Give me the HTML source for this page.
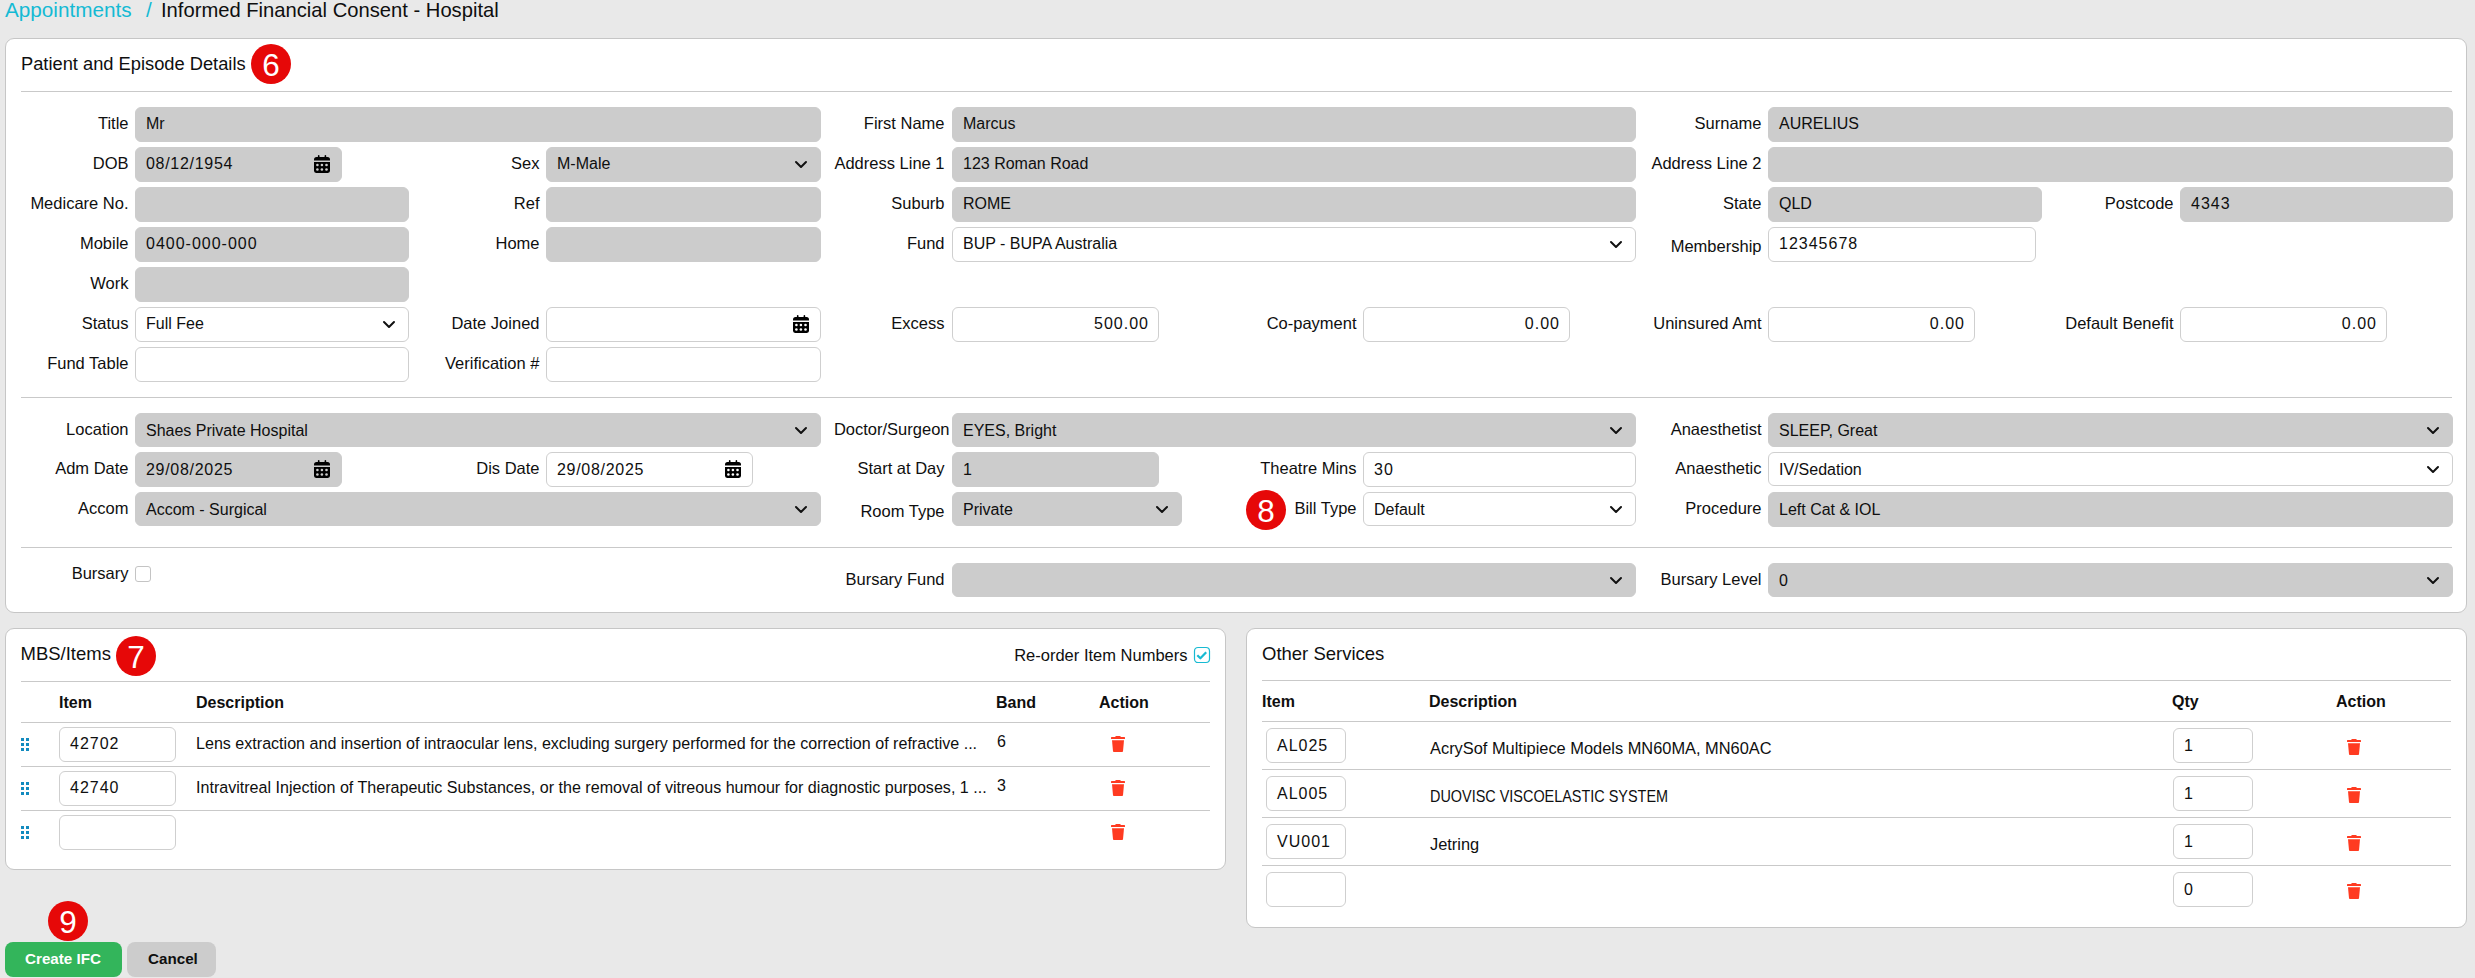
<!DOCTYPE html><html><head><meta charset="utf-8"><style>
html,body{margin:0;padding:0}
body{width:2475px;height:978px;overflow:hidden;background:#e9e9e9;position:relative;font-family:"Liberation Sans",sans-serif;color:#212529}
.t{position:absolute;white-space:nowrap}
.b{position:absolute;box-sizing:border-box;border-radius:6px}
.i{position:absolute;overflow:visible}
.hr{position:absolute;height:1px;background:#c9c9c9}
.card{position:absolute;box-sizing:border-box;background:#fff;border:1px solid #c6c6c6;border-radius:9px}
.bd{position:absolute;width:40px;height:40px;border-radius:50%;background:#e60808;color:#fff;font-size:31.5px;line-height:42px;text-align:center}
</style></head><body>

<div class="t" style="left:5px;top:-5px;font-size:20.7px;font-weight:400;color:#14bad4;line-height:30px;">Appointments</div>
<div class="t" style="left:146px;top:-5px;font-size:20.7px;font-weight:400;color:#14bad4;line-height:30px;">/</div>
<div class="t" style="left:161px;top:-5px;font-size:20.2px;font-weight:400;color:#0f0f0f;line-height:30px;">Informed Financial Consent - Hospital</div>
<div class="card" style="left:5px;top:38px;width:2462px;height:575px"></div>
<div class="t" style="left:21px;top:48px;font-size:18.3px;font-weight:400;color:#0f0f0f;line-height:32px;">Patient and Episode Details</div>
<div class="bd" style="left:251px;top:44px">6</div>
<div class="hr" style="left:21px;top:91px;width:2431px"></div>
<div class="t" style="right:2346.5px;top:107px;font-size:16.5px;font-weight:400;color:#0f0f0f;line-height:33px;">Title</div>
<div class="b" style="left:135px;top:107px;width:686px;height:35px;background:#cccccc;border:1px solid #cccccc"></div>
<div class="t" style="left:146px;top:107px;font-size:16px;font-weight:400;color:#0f0f0f;line-height:33px;">Mr</div>
<div class="t" style="right:1530.5px;top:107px;font-size:16.5px;font-weight:400;color:#0f0f0f;line-height:33px;">First Name</div>
<div class="b" style="left:952px;top:107px;width:684px;height:35px;background:#cccccc;border:1px solid #cccccc"></div>
<div class="t" style="left:963px;top:107px;font-size:16px;font-weight:400;color:#0f0f0f;line-height:33px;">Marcus</div>
<div class="t" style="right:713.5px;top:107px;font-size:16.5px;font-weight:400;color:#0f0f0f;line-height:33px;">Surname</div>
<div class="b" style="left:1768px;top:107px;width:685px;height:35px;background:#cccccc;border:1px solid #cccccc"></div>
<div class="t" style="left:1779px;top:107px;font-size:16px;font-weight:400;color:#0f0f0f;line-height:33px;">AURELIUS</div>
<div class="t" style="right:2346.5px;top:147px;font-size:16.5px;font-weight:400;color:#0f0f0f;line-height:33px;">DOB</div>
<div class="b" style="left:135px;top:147px;width:207px;height:35px;background:#cccccc;border:1px solid #cccccc"></div>
<div class="t" style="left:146px;top:147px;font-size:16px;font-weight:400;color:#0f0f0f;line-height:33px;letter-spacing:0.7px;">08/12/1954</div>
<svg class="i" style="left:314px;top:155px" width="16" height="18" viewBox="0 0 16 18"><rect x="3.9" y="0" width="1.6" height="4" rx="0.8" fill="#000"/><rect x="10.6" y="0" width="1.6" height="4" rx="0.8" fill="#000"/><path d="M0,4.5 Q0,2 2.5,2 L13.5,2 Q16,2 16,4.5 L16,5.6 L0,5.6 Z" fill="#000"/><path d="M0,7.1 L16,7.1 L16,15.8 Q16,17.9 13.9,17.9 L2.1,17.9 Q0,17.9 0,15.8 Z" fill="#000"/><circle cx="3.4" cy="10" r="1.3" fill="#cccccc"/><circle cx="3.4" cy="14.5" r="1.3" fill="#cccccc"/><circle cx="7.9" cy="10" r="1.3" fill="#cccccc"/><circle cx="7.9" cy="14.5" r="1.3" fill="#cccccc"/><circle cx="12.5" cy="10" r="1.3" fill="#cccccc"/><circle cx="12.5" cy="14.5" r="1.3" fill="#cccccc"/></svg>
<div class="t" style="right:1935.5px;top:147px;font-size:16.5px;font-weight:400;color:#0f0f0f;line-height:33px;">Sex</div>
<div class="b" style="left:546px;top:147px;width:275px;height:35px;background:#cccccc;border:1px solid #cccccc"></div>
<div class="t" style="left:557px;top:147px;font-size:16px;font-weight:400;color:#0f0f0f;line-height:33px;">M-Male</div>
<svg class="i" style="left:794px;top:160px" width="14" height="10"><polyline points="2,2 7,7 12,2" fill="none" stroke="#111" stroke-width="2" stroke-linecap="round" stroke-linejoin="round"/></svg>
<div class="t" style="right:1530.5px;top:147px;font-size:16.5px;font-weight:400;color:#0f0f0f;line-height:33px;">Address Line 1</div>
<div class="b" style="left:952px;top:147px;width:684px;height:35px;background:#cccccc;border:1px solid #cccccc"></div>
<div class="t" style="left:963px;top:147px;font-size:16px;font-weight:400;color:#0f0f0f;line-height:33px;">123 Roman Road</div>
<div class="t" style="right:713.5px;top:147px;font-size:16.5px;font-weight:400;color:#0f0f0f;line-height:33px;">Address Line 2</div>
<div class="b" style="left:1768px;top:147px;width:685px;height:35px;background:#cccccc;border:1px solid #cccccc"></div>
<div class="t" style="right:2346.5px;top:187px;font-size:16.5px;font-weight:400;color:#0f0f0f;line-height:33px;">Medicare No.</div>
<div class="b" style="left:135px;top:187px;width:274px;height:35px;background:#cccccc;border:1px solid #cccccc"></div>
<div class="t" style="right:1935.5px;top:187px;font-size:16.5px;font-weight:400;color:#0f0f0f;line-height:33px;">Ref</div>
<div class="b" style="left:546px;top:187px;width:275px;height:35px;background:#cccccc;border:1px solid #cccccc"></div>
<div class="t" style="right:1530.5px;top:187px;font-size:16.5px;font-weight:400;color:#0f0f0f;line-height:33px;">Suburb</div>
<div class="b" style="left:952px;top:187px;width:684px;height:35px;background:#cccccc;border:1px solid #cccccc"></div>
<div class="t" style="left:963px;top:187px;font-size:16px;font-weight:400;color:#0f0f0f;line-height:33px;">ROME</div>
<div class="t" style="right:713.5px;top:187px;font-size:16.5px;font-weight:400;color:#0f0f0f;line-height:33px;">State</div>
<div class="b" style="left:1768px;top:187px;width:274px;height:35px;background:#cccccc;border:1px solid #cccccc"></div>
<div class="t" style="left:1779px;top:187px;font-size:16px;font-weight:400;color:#0f0f0f;line-height:33px;">QLD</div>
<div class="t" style="right:301.5px;top:187px;font-size:16.5px;font-weight:400;color:#0f0f0f;line-height:33px;">Postcode</div>
<div class="b" style="left:2180px;top:187px;width:273px;height:35px;background:#cccccc;border:1px solid #cccccc"></div>
<div class="t" style="left:2191px;top:187px;font-size:16px;font-weight:400;color:#0f0f0f;line-height:33px;letter-spacing:1.0px;">4343</div>
<div class="t" style="right:2346.5px;top:227px;font-size:16.5px;font-weight:400;color:#0f0f0f;line-height:33px;">Mobile</div>
<div class="b" style="left:135px;top:227px;width:274px;height:35px;background:#cccccc;border:1px solid #cccccc"></div>
<div class="t" style="left:146px;top:227px;font-size:16px;font-weight:400;color:#0f0f0f;line-height:33px;letter-spacing:1.0px;">0400-000-000</div>
<div class="t" style="right:1935.5px;top:227px;font-size:16.5px;font-weight:400;color:#0f0f0f;line-height:33px;">Home</div>
<div class="b" style="left:546px;top:227px;width:275px;height:35px;background:#cccccc;border:1px solid #cccccc"></div>
<div class="t" style="right:1530.5px;top:227px;font-size:16.5px;font-weight:400;color:#0f0f0f;line-height:33px;">Fund</div>
<div class="b" style="left:952px;top:227px;width:684px;height:35px;background:#fff;border:1px solid #cfcfcf"></div>
<div class="t" style="left:963px;top:227px;font-size:16px;font-weight:400;color:#0f0f0f;line-height:33px;">BUP - BUPA Australia</div>
<svg class="i" style="left:1609px;top:240px" width="14" height="10"><polyline points="2,2 7,7 12,2" fill="none" stroke="#111" stroke-width="2" stroke-linecap="round" stroke-linejoin="round"/></svg>
<div class="t" style="right:713.5px;top:230px;font-size:16.5px;font-weight:400;color:#0f0f0f;line-height:33px;">Membership</div>
<div class="b" style="left:1768px;top:227px;width:268px;height:35px;background:#fff;border:1px solid #cfcfcf"></div>
<div class="t" style="left:1779px;top:227px;font-size:16px;font-weight:400;color:#0f0f0f;line-height:33px;letter-spacing:1.0px;">12345678</div>
<div class="t" style="right:2346.5px;top:267px;font-size:16.5px;font-weight:400;color:#0f0f0f;line-height:33px;">Work</div>
<div class="b" style="left:135px;top:267px;width:274px;height:35px;background:#cccccc;border:1px solid #cccccc"></div>
<div class="t" style="right:2346.5px;top:307px;font-size:16.5px;font-weight:400;color:#0f0f0f;line-height:33px;">Status</div>
<div class="b" style="left:135px;top:307px;width:274px;height:35px;background:#fff;border:1px solid #cfcfcf"></div>
<div class="t" style="left:146px;top:307px;font-size:16px;font-weight:400;color:#0f0f0f;line-height:33px;">Full Fee</div>
<svg class="i" style="left:382px;top:320px" width="14" height="10"><polyline points="2,2 7,7 12,2" fill="none" stroke="#111" stroke-width="2" stroke-linecap="round" stroke-linejoin="round"/></svg>
<div class="t" style="right:1935.5px;top:307px;font-size:16.5px;font-weight:400;color:#0f0f0f;line-height:33px;">Date Joined</div>
<div class="b" style="left:546px;top:307px;width:275px;height:35px;background:#fff;border:1px solid #cfcfcf"></div>
<svg class="i" style="left:793px;top:315px" width="16" height="18" viewBox="0 0 16 18"><rect x="3.9" y="0" width="1.6" height="4" rx="0.8" fill="#000"/><rect x="10.6" y="0" width="1.6" height="4" rx="0.8" fill="#000"/><path d="M0,4.5 Q0,2 2.5,2 L13.5,2 Q16,2 16,4.5 L16,5.6 L0,5.6 Z" fill="#000"/><path d="M0,7.1 L16,7.1 L16,15.8 Q16,17.9 13.9,17.9 L2.1,17.9 Q0,17.9 0,15.8 Z" fill="#000"/><circle cx="3.4" cy="10" r="1.3" fill="#fff"/><circle cx="3.4" cy="14.5" r="1.3" fill="#fff"/><circle cx="7.9" cy="10" r="1.3" fill="#fff"/><circle cx="7.9" cy="14.5" r="1.3" fill="#fff"/><circle cx="12.5" cy="10" r="1.3" fill="#fff"/><circle cx="12.5" cy="14.5" r="1.3" fill="#fff"/></svg>
<div class="t" style="right:1530.5px;top:307px;font-size:16.5px;font-weight:400;color:#0f0f0f;line-height:33px;">Excess</div>
<div class="b" style="left:952px;top:307px;width:207px;height:35px;background:#fff;border:1px solid #cfcfcf"></div>
<div class="t" style="right:1326.0px;top:307px;font-size:16px;font-weight:400;color:#0f0f0f;line-height:33px;letter-spacing:1.0px;">500.00</div>
<div class="t" style="right:1118.5px;top:307px;font-size:16.5px;font-weight:400;color:#0f0f0f;line-height:33px;">Co-payment</div>
<div class="b" style="left:1363px;top:307px;width:207px;height:35px;background:#fff;border:1px solid #cfcfcf"></div>
<div class="t" style="right:915.0px;top:307px;font-size:16px;font-weight:400;color:#0f0f0f;line-height:33px;letter-spacing:1.0px;">0.00</div>
<div class="t" style="right:713.5px;top:307px;font-size:16.5px;font-weight:400;color:#0f0f0f;line-height:33px;">Uninsured Amt</div>
<div class="b" style="left:1768px;top:307px;width:207px;height:35px;background:#fff;border:1px solid #cfcfcf"></div>
<div class="t" style="right:510.0px;top:307px;font-size:16px;font-weight:400;color:#0f0f0f;line-height:33px;letter-spacing:1.0px;">0.00</div>
<div class="t" style="right:301.5px;top:307px;font-size:16.5px;font-weight:400;color:#0f0f0f;line-height:33px;">Default Benefit</div>
<div class="b" style="left:2180px;top:307px;width:207px;height:35px;background:#fff;border:1px solid #cfcfcf"></div>
<div class="t" style="right:98.0px;top:307px;font-size:16px;font-weight:400;color:#0f0f0f;line-height:33px;letter-spacing:1.0px;">0.00</div>
<div class="t" style="right:2346.5px;top:347px;font-size:16.5px;font-weight:400;color:#0f0f0f;line-height:33px;">Fund Table</div>
<div class="b" style="left:135px;top:347px;width:274px;height:35px;background:#fff;border:1px solid #cfcfcf"></div>
<div class="t" style="right:1935.5px;top:347px;font-size:16.5px;font-weight:400;color:#0f0f0f;line-height:33px;">Verification #</div>
<div class="b" style="left:546px;top:347px;width:275px;height:35px;background:#fff;border:1px solid #cfcfcf"></div>
<div class="hr" style="left:21px;top:397px;width:2431px"></div>
<div class="t" style="right:2346.5px;top:413px;font-size:16.5px;font-weight:400;color:#0f0f0f;line-height:33px;">Location</div>
<div class="b" style="left:135px;top:413px;width:686px;height:34px;background:#cccccc;border:1px solid #cccccc"></div>
<div class="t" style="left:146px;top:414px;font-size:16px;font-weight:400;color:#0f0f0f;line-height:33px;">Shaes Private Hospital</div>
<svg class="i" style="left:794px;top:426px" width="14" height="10"><polyline points="2,2 7,7 12,2" fill="none" stroke="#111" stroke-width="2" stroke-linecap="round" stroke-linejoin="round"/></svg>
<div class="t" style="right:1525.5px;top:413px;font-size:16.5px;font-weight:400;color:#0f0f0f;line-height:33px;">Doctor/Surgeon</div>
<div class="b" style="left:952px;top:413px;width:684px;height:34px;background:#cccccc;border:1px solid #cccccc"></div>
<div class="t" style="left:963px;top:414px;font-size:16px;font-weight:400;color:#0f0f0f;line-height:33px;">EYES, Bright</div>
<svg class="i" style="left:1609px;top:426px" width="14" height="10"><polyline points="2,2 7,7 12,2" fill="none" stroke="#111" stroke-width="2" stroke-linecap="round" stroke-linejoin="round"/></svg>
<div class="t" style="right:713.5px;top:413px;font-size:16.5px;font-weight:400;color:#0f0f0f;line-height:33px;">Anaesthetist</div>
<div class="b" style="left:1768px;top:413px;width:685px;height:34px;background:#cccccc;border:1px solid #cccccc"></div>
<div class="t" style="left:1779px;top:414px;font-size:16px;font-weight:400;color:#0f0f0f;line-height:33px;">SLEEP, Great</div>
<svg class="i" style="left:2426px;top:426px" width="14" height="10"><polyline points="2,2 7,7 12,2" fill="none" stroke="#111" stroke-width="2" stroke-linecap="round" stroke-linejoin="round"/></svg>
<div class="t" style="right:2346.5px;top:452px;font-size:16.5px;font-weight:400;color:#0f0f0f;line-height:33px;">Adm Date</div>
<div class="b" style="left:135px;top:452px;width:207px;height:35px;background:#cccccc;border:1px solid #cccccc"></div>
<div class="t" style="left:146px;top:453px;font-size:16px;font-weight:400;color:#0f0f0f;line-height:33px;letter-spacing:0.7px;">29/08/2025</div>
<svg class="i" style="left:314px;top:460px" width="16" height="18" viewBox="0 0 16 18"><rect x="3.9" y="0" width="1.6" height="4" rx="0.8" fill="#000"/><rect x="10.6" y="0" width="1.6" height="4" rx="0.8" fill="#000"/><path d="M0,4.5 Q0,2 2.5,2 L13.5,2 Q16,2 16,4.5 L16,5.6 L0,5.6 Z" fill="#000"/><path d="M0,7.1 L16,7.1 L16,15.8 Q16,17.9 13.9,17.9 L2.1,17.9 Q0,17.9 0,15.8 Z" fill="#000"/><circle cx="3.4" cy="10" r="1.3" fill="#cccccc"/><circle cx="3.4" cy="14.5" r="1.3" fill="#cccccc"/><circle cx="7.9" cy="10" r="1.3" fill="#cccccc"/><circle cx="7.9" cy="14.5" r="1.3" fill="#cccccc"/><circle cx="12.5" cy="10" r="1.3" fill="#cccccc"/><circle cx="12.5" cy="14.5" r="1.3" fill="#cccccc"/></svg>
<div class="t" style="right:1935.5px;top:452px;font-size:16.5px;font-weight:400;color:#0f0f0f;line-height:33px;">Dis Date</div>
<div class="b" style="left:546px;top:452px;width:207px;height:35px;background:#fff;border:1px solid #cfcfcf"></div>
<div class="t" style="left:557px;top:453px;font-size:16px;font-weight:400;color:#0f0f0f;line-height:33px;letter-spacing:0.7px;">29/08/2025</div>
<svg class="i" style="left:725px;top:460px" width="16" height="18" viewBox="0 0 16 18"><rect x="3.9" y="0" width="1.6" height="4" rx="0.8" fill="#000"/><rect x="10.6" y="0" width="1.6" height="4" rx="0.8" fill="#000"/><path d="M0,4.5 Q0,2 2.5,2 L13.5,2 Q16,2 16,4.5 L16,5.6 L0,5.6 Z" fill="#000"/><path d="M0,7.1 L16,7.1 L16,15.8 Q16,17.9 13.9,17.9 L2.1,17.9 Q0,17.9 0,15.8 Z" fill="#000"/><circle cx="3.4" cy="10" r="1.3" fill="#fff"/><circle cx="3.4" cy="14.5" r="1.3" fill="#fff"/><circle cx="7.9" cy="10" r="1.3" fill="#fff"/><circle cx="7.9" cy="14.5" r="1.3" fill="#fff"/><circle cx="12.5" cy="10" r="1.3" fill="#fff"/><circle cx="12.5" cy="14.5" r="1.3" fill="#fff"/></svg>
<div class="t" style="right:1530.5px;top:452px;font-size:16.5px;font-weight:400;color:#0f0f0f;line-height:33px;">Start at Day</div>
<div class="b" style="left:952px;top:452px;width:207px;height:35px;background:#cccccc;border:1px solid #cccccc"></div>
<div class="t" style="left:963px;top:453px;font-size:16px;font-weight:400;color:#0f0f0f;line-height:33px;">1</div>
<div class="t" style="right:1118.5px;top:452px;font-size:16.5px;font-weight:400;color:#0f0f0f;line-height:33px;">Theatre Mins</div>
<div class="b" style="left:1363px;top:452px;width:273px;height:35px;background:#fff;border:1px solid #cfcfcf"></div>
<div class="t" style="left:1374px;top:453px;font-size:16px;font-weight:400;color:#0f0f0f;line-height:33px;letter-spacing:1.0px;">30</div>
<div class="t" style="right:713.5px;top:452px;font-size:16.5px;font-weight:400;color:#0f0f0f;line-height:33px;">Anaesthetic</div>
<div class="b" style="left:1768px;top:452px;width:685px;height:34px;background:#fff;border:1px solid #cfcfcf"></div>
<div class="t" style="left:1779px;top:453px;font-size:16px;font-weight:400;color:#0f0f0f;line-height:33px;">IV/Sedation</div>
<svg class="i" style="left:2426px;top:465px" width="14" height="10"><polyline points="2,2 7,7 12,2" fill="none" stroke="#111" stroke-width="2" stroke-linecap="round" stroke-linejoin="round"/></svg>
<div class="t" style="right:2346.5px;top:492px;font-size:16.5px;font-weight:400;color:#0f0f0f;line-height:33px;">Accom</div>
<div class="b" style="left:135px;top:492px;width:686px;height:34px;background:#cccccc;border:1px solid #cccccc"></div>
<div class="t" style="left:146px;top:493px;font-size:16px;font-weight:400;color:#0f0f0f;line-height:33px;">Accom - Surgical</div>
<svg class="i" style="left:794px;top:505px" width="14" height="10"><polyline points="2,2 7,7 12,2" fill="none" stroke="#111" stroke-width="2" stroke-linecap="round" stroke-linejoin="round"/></svg>
<div class="t" style="right:1530.5px;top:495px;font-size:16.5px;font-weight:400;color:#0f0f0f;line-height:33px;">Room Type</div>
<div class="b" style="left:952px;top:492px;width:230px;height:34px;background:#cccccc;border:1px solid #cccccc"></div>
<div class="t" style="left:963px;top:493px;font-size:16px;font-weight:400;color:#0f0f0f;line-height:33px;">Private</div>
<svg class="i" style="left:1155px;top:505px" width="14" height="10"><polyline points="2,2 7,7 12,2" fill="none" stroke="#111" stroke-width="2" stroke-linecap="round" stroke-linejoin="round"/></svg>
<div class="bd" style="left:1246px;top:490px">8</div>
<div class="t" style="right:1118.5px;top:492px;font-size:16.5px;font-weight:400;color:#0f0f0f;line-height:33px;">Bill Type</div>
<div class="b" style="left:1363px;top:492px;width:273px;height:34px;background:#fff;border:1px solid #cfcfcf"></div>
<div class="t" style="left:1374px;top:493px;font-size:16px;font-weight:400;color:#0f0f0f;line-height:33px;">Default</div>
<svg class="i" style="left:1609px;top:505px" width="14" height="10"><polyline points="2,2 7,7 12,2" fill="none" stroke="#111" stroke-width="2" stroke-linecap="round" stroke-linejoin="round"/></svg>
<div class="t" style="right:713.5px;top:492px;font-size:16.5px;font-weight:400;color:#0f0f0f;line-height:33px;">Procedure</div>
<div class="b" style="left:1768px;top:492px;width:685px;height:35px;background:#cccccc;border:1px solid #cccccc"></div>
<div class="t" style="left:1779px;top:493px;font-size:16px;font-weight:400;color:#0f0f0f;line-height:33px;">Left Cat &amp; IOL</div>
<div class="hr" style="left:21px;top:547px;width:2431px"></div>
<div class="t" style="right:2346.5px;top:557px;font-size:16.5px;font-weight:400;color:#0f0f0f;line-height:33px;">Bursary</div>
<div class="b" style="left:135px;top:566px;width:16px;height:16px;border:1px solid #c4c4c4;border-radius:3px;background:#fff"></div>
<div class="t" style="right:1530.5px;top:563px;font-size:16.5px;font-weight:400;color:#0f0f0f;line-height:33px;">Bursary Fund</div>
<div class="b" style="left:952px;top:563px;width:684px;height:34px;background:#cccccc;border:1px solid #cccccc"></div>
<svg class="i" style="left:1609px;top:576px" width="14" height="10"><polyline points="2,2 7,7 12,2" fill="none" stroke="#111" stroke-width="2" stroke-linecap="round" stroke-linejoin="round"/></svg>
<div class="t" style="right:713.5px;top:563px;font-size:16.5px;font-weight:400;color:#0f0f0f;line-height:33px;">Bursary Level</div>
<div class="b" style="left:1768px;top:563px;width:685px;height:34px;background:#cccccc;border:1px solid #cccccc"></div>
<div class="t" style="left:1779px;top:564px;font-size:16px;font-weight:400;color:#0f0f0f;line-height:33px;">0</div>
<svg class="i" style="left:2426px;top:576px" width="14" height="10"><polyline points="2,2 7,7 12,2" fill="none" stroke="#111" stroke-width="2" stroke-linecap="round" stroke-linejoin="round"/></svg>
<div class="card" style="left:5px;top:628px;width:1221px;height:242px"></div>
<div class="t" style="left:20.5px;top:638px;font-size:18.5px;font-weight:400;color:#0f0f0f;line-height:32px;">MBS/Items</div>
<div class="bd" style="left:116px;top:636px">7</div>
<div class="t" style="right:1287.5px;top:639px;font-size:16.5px;font-weight:400;color:#0f0f0f;line-height:33px;">Re-order Item Numbers</div>
<svg class="i" style="left:1194px;top:647px" width="16" height="16" viewBox="0 0 16 16"><rect x="0.5" y="0.5" width="15" height="15" rx="3.5" fill="#fff" stroke="#17bad2" stroke-width="1.2"/><polyline points="3.3,8.2 6.4,11.3 12.2,5.2" fill="none" stroke="#17bad2" stroke-width="2.2" stroke-linejoin="round"/></svg>
<div class="hr" style="left:21px;top:681px;width:1189px"></div>
<div class="t" style="left:59px;top:686px;font-size:16px;font-weight:700;color:#0f0f0f;line-height:33px;">Item</div>
<div class="t" style="left:196px;top:686px;font-size:16px;font-weight:700;color:#0f0f0f;line-height:33px;">Description</div>
<div class="t" style="left:996px;top:686px;font-size:16px;font-weight:700;color:#0f0f0f;line-height:33px;">Band</div>
<div class="t" style="left:1099px;top:686px;font-size:16px;font-weight:700;color:#0f0f0f;line-height:33px;">Action</div>
<div class="hr" style="left:21px;top:722px;width:1189px"></div>
<svg class="i" style="left:21px;top:738px" width="8" height="13"><rect x="0" y="0" width="3" height="3" fill="#138bbf"/><rect x="0" y="5" width="3" height="3" fill="#138bbf"/><rect x="0" y="10" width="3" height="3" fill="#138bbf"/><rect x="5" y="0" width="3" height="3" fill="#138bbf"/><rect x="5" y="5" width="3" height="3" fill="#138bbf"/><rect x="5" y="10" width="3" height="3" fill="#138bbf"/></svg>
<div class="b" style="left:59px;top:727px;width:117px;height:35px;background:#fff;border:1px solid #cfcfcf"></div>
<div class="t" style="left:70px;top:727px;font-size:16px;font-weight:400;color:#0f0f0f;line-height:33px;letter-spacing:1.0px;">42702</div>
<div class="t" style="left:196px;top:727px;font-size:16.08px;font-weight:400;color:#0f0f0f;line-height:33px;">Lens extraction and insertion of intraocular lens, excluding surgery performed for the correction of refractive ...</div>
<div class="t" style="left:997px;top:725px;font-size:16px;font-weight:400;color:#0f0f0f;line-height:33px;">6</div>
<svg class="i" style="left:1111px;top:736px" width="14" height="16" viewBox="0 0 14 16"><rect x="4.2" y="0" width="5.6" height="2.2" rx="1.1" fill="#ff3b21"/><rect x="0" y="1" width="14" height="2" rx="0.5" fill="#ff3b21"/><path d="M1,4.2 L13,4.2 L12,15.2 Q11.9,16 11.1,16 L2.9,16 Q2.1,16 2,15.2 Z" fill="#ff3b21"/></svg>
<div class="hr" style="left:21px;top:766px;width:1189px"></div>
<svg class="i" style="left:21px;top:782px" width="8" height="13"><rect x="0" y="0" width="3" height="3" fill="#138bbf"/><rect x="0" y="5" width="3" height="3" fill="#138bbf"/><rect x="0" y="10" width="3" height="3" fill="#138bbf"/><rect x="5" y="0" width="3" height="3" fill="#138bbf"/><rect x="5" y="5" width="3" height="3" fill="#138bbf"/><rect x="5" y="10" width="3" height="3" fill="#138bbf"/></svg>
<div class="b" style="left:59px;top:771px;width:117px;height:35px;background:#fff;border:1px solid #cfcfcf"></div>
<div class="t" style="left:70px;top:771px;font-size:16px;font-weight:400;color:#0f0f0f;line-height:33px;letter-spacing:1.0px;">42740</div>
<div class="t" style="left:196px;top:771px;font-size:16.08px;font-weight:400;color:#0f0f0f;line-height:33px;">Intravitreal Injection of Therapeutic Substances, or the removal of vitreous humour for diagnostic purposes, 1 ...</div>
<div class="t" style="left:997px;top:769px;font-size:16px;font-weight:400;color:#0f0f0f;line-height:33px;">3</div>
<svg class="i" style="left:1111px;top:780px" width="14" height="16" viewBox="0 0 14 16"><rect x="4.2" y="0" width="5.6" height="2.2" rx="1.1" fill="#ff3b21"/><rect x="0" y="1" width="14" height="2" rx="0.5" fill="#ff3b21"/><path d="M1,4.2 L13,4.2 L12,15.2 Q11.9,16 11.1,16 L2.9,16 Q2.1,16 2,15.2 Z" fill="#ff3b21"/></svg>
<div class="hr" style="left:21px;top:810px;width:1189px"></div>
<svg class="i" style="left:21px;top:826px" width="8" height="13"><rect x="0" y="0" width="3" height="3" fill="#138bbf"/><rect x="0" y="5" width="3" height="3" fill="#138bbf"/><rect x="0" y="10" width="3" height="3" fill="#138bbf"/><rect x="5" y="0" width="3" height="3" fill="#138bbf"/><rect x="5" y="5" width="3" height="3" fill="#138bbf"/><rect x="5" y="10" width="3" height="3" fill="#138bbf"/></svg>
<div class="b" style="left:59px;top:815px;width:117px;height:35px;background:#fff;border:1px solid #cfcfcf"></div>
<svg class="i" style="left:1111px;top:824px" width="14" height="16" viewBox="0 0 14 16"><rect x="4.2" y="0" width="5.6" height="2.2" rx="1.1" fill="#ff3b21"/><rect x="0" y="1" width="14" height="2" rx="0.5" fill="#ff3b21"/><path d="M1,4.2 L13,4.2 L12,15.2 Q11.9,16 11.1,16 L2.9,16 Q2.1,16 2,15.2 Z" fill="#ff3b21"/></svg>
<div class="card" style="left:1246px;top:628px;width:1221px;height:300px"></div>
<div class="t" style="left:1262px;top:638px;font-size:18.5px;font-weight:400;color:#0f0f0f;line-height:32px;">Other Services</div>
<div class="hr" style="left:1262px;top:680px;width:1189px"></div>
<div class="t" style="left:1262px;top:685px;font-size:16px;font-weight:700;color:#0f0f0f;line-height:33px;">Item</div>
<div class="t" style="left:1429px;top:685px;font-size:16px;font-weight:700;color:#0f0f0f;line-height:33px;">Description</div>
<div class="t" style="left:2172px;top:685px;font-size:16px;font-weight:700;color:#0f0f0f;line-height:33px;">Qty</div>
<div class="t" style="left:2336px;top:685px;font-size:16px;font-weight:700;color:#0f0f0f;line-height:33px;">Action</div>
<div class="hr" style="left:1262px;top:721px;width:1189px"></div>
<div class="b" style="left:1266px;top:728px;width:80px;height:35px;background:#fff;border:1px solid #cfcfcf"></div>
<div class="t" style="left:1277px;top:729px;font-size:16px;font-weight:400;color:#0f0f0f;line-height:33px;letter-spacing:1.0px;">AL025</div>
<div class="t" style="left:1430px;top:731.5px;font-size:16.4px;font-weight:400;color:#0f0f0f;line-height:33px;">AcrySof Multipiece Models MN60MA, MN60AC</div>
<div class="b" style="left:2173px;top:728px;width:80px;height:35px;background:#fff;border:1px solid #cfcfcf"></div>
<div class="t" style="left:2184px;top:729px;font-size:16px;font-weight:400;color:#0f0f0f;line-height:33px;">1</div>
<svg class="i" style="left:2347px;top:739px" width="14" height="16" viewBox="0 0 14 16"><rect x="4.2" y="0" width="5.6" height="2.2" rx="1.1" fill="#ff3b21"/><rect x="0" y="1" width="14" height="2" rx="0.5" fill="#ff3b21"/><path d="M1,4.2 L13,4.2 L12,15.2 Q11.9,16 11.1,16 L2.9,16 Q2.1,16 2,15.2 Z" fill="#ff3b21"/></svg>
<div class="hr" style="left:1262px;top:769px;width:1189px"></div>
<div class="b" style="left:1266px;top:776px;width:80px;height:35px;background:#fff;border:1px solid #cfcfcf"></div>
<div class="t" style="left:1277px;top:777px;font-size:16px;font-weight:400;color:#0f0f0f;line-height:33px;letter-spacing:1.0px;">AL005</div>
<div class="t" style="left:1430px;top:779.5px;font-size:16.4px;font-weight:400;color:#0f0f0f;line-height:33px;transform:scaleX(0.88);transform-origin:0 0;">DUOVISC VISCOELASTIC SYSTEM</div>
<div class="b" style="left:2173px;top:776px;width:80px;height:35px;background:#fff;border:1px solid #cfcfcf"></div>
<div class="t" style="left:2184px;top:777px;font-size:16px;font-weight:400;color:#0f0f0f;line-height:33px;">1</div>
<svg class="i" style="left:2347px;top:787px" width="14" height="16" viewBox="0 0 14 16"><rect x="4.2" y="0" width="5.6" height="2.2" rx="1.1" fill="#ff3b21"/><rect x="0" y="1" width="14" height="2" rx="0.5" fill="#ff3b21"/><path d="M1,4.2 L13,4.2 L12,15.2 Q11.9,16 11.1,16 L2.9,16 Q2.1,16 2,15.2 Z" fill="#ff3b21"/></svg>
<div class="hr" style="left:1262px;top:817px;width:1189px"></div>
<div class="b" style="left:1266px;top:824px;width:80px;height:35px;background:#fff;border:1px solid #cfcfcf"></div>
<div class="t" style="left:1277px;top:825px;font-size:16px;font-weight:400;color:#0f0f0f;line-height:33px;letter-spacing:1.0px;">VU001</div>
<div class="t" style="left:1430px;top:827.5px;font-size:16.4px;font-weight:400;color:#0f0f0f;line-height:33px;">Jetring</div>
<div class="b" style="left:2173px;top:824px;width:80px;height:35px;background:#fff;border:1px solid #cfcfcf"></div>
<div class="t" style="left:2184px;top:825px;font-size:16px;font-weight:400;color:#0f0f0f;line-height:33px;">1</div>
<svg class="i" style="left:2347px;top:835px" width="14" height="16" viewBox="0 0 14 16"><rect x="4.2" y="0" width="5.6" height="2.2" rx="1.1" fill="#ff3b21"/><rect x="0" y="1" width="14" height="2" rx="0.5" fill="#ff3b21"/><path d="M1,4.2 L13,4.2 L12,15.2 Q11.9,16 11.1,16 L2.9,16 Q2.1,16 2,15.2 Z" fill="#ff3b21"/></svg>
<div class="hr" style="left:1262px;top:865px;width:1189px"></div>
<div class="b" style="left:1266px;top:872px;width:80px;height:35px;background:#fff;border:1px solid #cfcfcf"></div>
<div class="b" style="left:2173px;top:872px;width:80px;height:35px;background:#fff;border:1px solid #cfcfcf"></div>
<div class="t" style="left:2184px;top:873px;font-size:16px;font-weight:400;color:#0f0f0f;line-height:33px;">0</div>
<svg class="i" style="left:2347px;top:883px" width="14" height="16" viewBox="0 0 14 16"><rect x="4.2" y="0" width="5.6" height="2.2" rx="1.1" fill="#ff3b21"/><rect x="0" y="1" width="14" height="2" rx="0.5" fill="#ff3b21"/><path d="M1,4.2 L13,4.2 L12,15.2 Q11.9,16 11.1,16 L2.9,16 Q2.1,16 2,15.2 Z" fill="#ff3b21"/></svg>
<div class="bd" style="left:48px;top:901px">9</div>
<div class="b" style="left:5px;top:942px;width:117px;height:35px;background:#33b55b;border-radius:8px"></div>
<div class="t" style="left:25px;top:942px;font-size:15.2px;font-weight:700;color:#fff;line-height:33px;">Create IFC</div>
<div class="b" style="left:127px;top:942px;width:89px;height:35px;background:#cccccc;border-radius:8px"></div>
<div class="t" style="left:148px;top:942px;font-size:15.2px;font-weight:700;color:#0f0f0f;line-height:33px;">Cancel</div>
</body></html>
